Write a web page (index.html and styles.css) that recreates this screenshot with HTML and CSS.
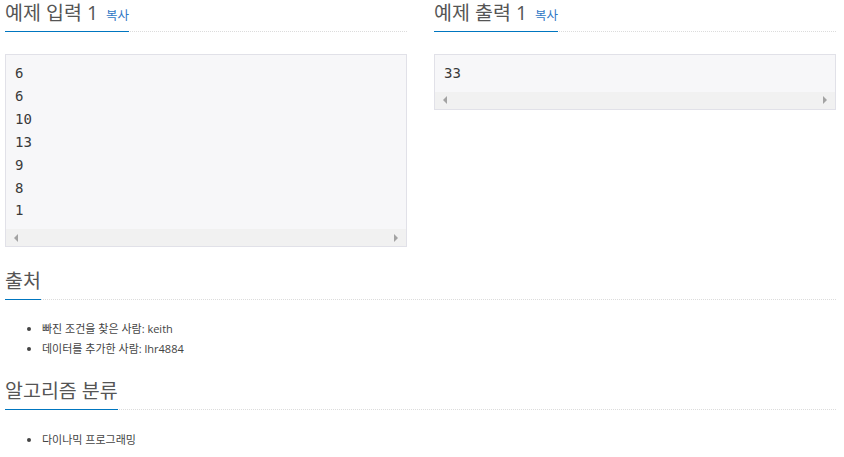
FILE: index.html
```html
<!DOCTYPE html>
<html lang="ko">
<head>
<meta charset="utf-8">
<title>예제</title>
<link rel="stylesheet" href="styles.css">
</head>
<body>
<div class="page">
  <div class="samples">
    <section class="sample">
      <div class="headline"><h2>예제 입력 1 <a class="copy" href="#">복사</a></h2></div>
      <div class="sampledata">
        <pre>6
6
10
13
9
8
1</pre>
        <div class="hscroll"><span class="arrow left"></span><span class="arrow right"></span></div>
      </div>
    </section>
    <section class="sample">
      <div class="headline"><h2>예제 출력 1 <a class="copy" href="#">복사</a></h2></div>
      <div class="sampledata">
        <pre>33</pre>
        <div class="hscroll"><span class="arrow left"></span><span class="arrow right"></span></div>
      </div>
    </section>
  </div>

  <section class="block source">
    <div class="headline"><h2>출처</h2></div>
    <ul class="items">
      <li>빠진 조건을 찾은 사람: keith</li>
      <li>데이터를 추가한 사람: lhr4884</li>
    </ul>
  </section>

  <section class="block tags">
    <div class="headline"><h2>알고리즘 분류</h2></div>
    <ul class="items">
      <li>다이나믹 프로그래밍</li>
    </ul>
  </section>
</div>
</body>
</html>
```

FILE: styles.css
```css
html, body {
  margin: 0;
  padding: 0;
  background: #fff;
}

body {
  font-family: "Open Sans", "Noto Sans CJK KR", sans-serif;
  color: #555;
}

.page {
  width: 831px;
  margin-left: 5px;
}

.samples {
  display: grid;
  grid-template-columns: 1fr 1fr;
  column-gap: 27px;
  align-items: start;
}

.headline {
  display: flex;
  align-items: flex-end;
  border-bottom: 1px dotted #dcdcdc;
  margin-bottom: 22px;
}

.headline h2 {
  margin: 0 0 -1px 0;
  padding: 0 0 4.5px 0;
  height: 26.5px;
  font-size: 19.5px;
  line-height: 26.5px;
  font-weight: 400;
  color: #555;
  border-bottom: 1px solid #0076c0;
  white-space: nowrap;
}

.copy {
  font-size: 12.5px;
  line-height: 1;
  color: #3178c6;
  text-decoration: none;
  margin-left: 3px;
}

.sampledata {
  border: 1px solid #e1e1e8;
  background: #f7f7f9;
}

.sampledata pre {
  margin: 0;
  padding: 7px 9px;
  font-family: "DejaVu Sans Mono", monospace;
  font-size: 14px;
  line-height: 22.9px;
  color: #3a3a3a;
}

.hscroll {
  height: 17px;
  background: #f1f1f1;
  display: flex;
  justify-content: space-between;
  align-items: center;
  padding: 0 8px;
}

.arrow {
  width: 0;
  height: 0;
  border-top: 4px solid transparent;
  border-bottom: 4px solid transparent;
}

.arrow.left {
  border-right: 4px solid #a3a3a3;
}

.arrow.right {
  border-left: 4px solid #a3a3a3;
}

.block {
  margin-top: 21px;
}

.block .headline {
  margin-bottom: 19px;
}

.tags {
  margin-top: 19px;
}

.tags .headline {
  margin-bottom: 20px;
}

.items {
  margin: 0;
  padding: 0 0 0 37px;
  font-size: 11px;
  line-height: 20px;
  color: #444;
}
```
